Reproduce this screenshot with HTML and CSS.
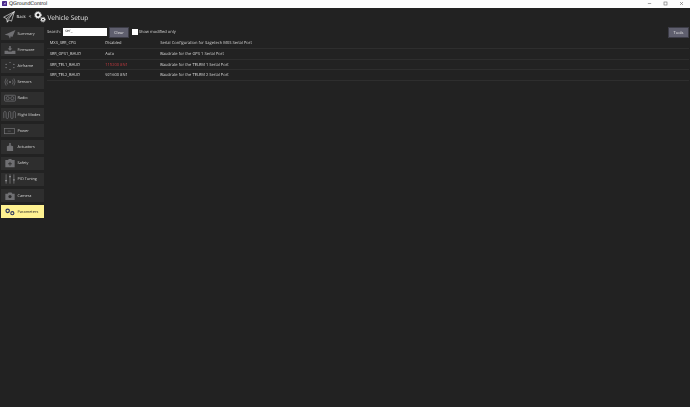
FILE: index.html
```html
<!DOCTYPE html>
<html lang="en">
<head>
<meta charset="utf-8">
<title>QGroundControl</title>
<link rel="stylesheet" href="styles.css">
</head>
<body>
<div class="titlebar">
  <svg class="app-icon" viewBox="0 0 8 8"><rect width="8" height="8" rx="1" fill="#4b2a8c"/><path d="M2 5.5 6 2 5 6 4 4.6z" fill="#e8e0f5"/></svg>
  <span class="app-name">QGroundControl</span>
  <div class="win-controls">
    <svg viewBox="0 0 6 6"><path d="M1 3h4" stroke="#666" stroke-width=".7"/></svg>
    <svg viewBox="0 0 6 6"><rect x="1.2" y="1.2" width="3.6" height="3.6" fill="none" stroke="#666" stroke-width=".7"/></svg>
    <svg viewBox="0 0 6 6"><path d="M1.2 1.2l3.6 3.6M4.8 1.2 1.2 4.8" stroke="#666" stroke-width=".7"/></svg>
  </div>
</div>
<div class="toolbar">
  <svg class="plane" viewBox="0 0 12 12"><path d="M11.4.6.6 6.2l3 1.4.7 3.6 2-2.2 2.2 1.2zM3.6 7.6 11.4.6 5.2 8.4l-.9 2.8" fill="none" stroke="#fff" stroke-width=".6" stroke-linejoin="round"/></svg>
  <span class="back">Back</span>
  <span class="chev">&lt;</span>
  <svg class="gears" viewBox="0 0 12 12"><g fill="none" stroke="#fff"><circle cx="4" cy="4" r="2.2" stroke-width="1.5"/><circle cx="4" cy="4" r="3.4" stroke-width=".8" stroke-dasharray="1 1"/><circle cx="9" cy="8.6" r="1.5" stroke-width="1.1"/><circle cx="9" cy="8.6" r="2.5" stroke-width=".7" stroke-dasharray=".8 .8"/></g></svg>
  <span class="page-title">Vehicle Setup</span>
</div>
<div class="main">
  <nav class="sidebar">
    <a class="nav-btn"><svg viewBox="0 0 18 12"><path d="M16 1 2 7l5 1 2 4 1-3 2 1z" fill="#6f6f72"/></svg><span>Summary</span></a>
    <a class="nav-btn"><svg viewBox="0 0 18 12"><path d="M8 1h2v3h2l-3 3-3-3h2zM2 7h4l1 1h4l1-1h4v4H2z" fill="#6f6f72"/></svg><span>Firmware</span></a>
    <a class="nav-btn"><svg viewBox="0 0 18 12"><g fill="#8a8a8d"><circle cx="9" cy="1.500" r=".8"/><circle cx="14" cy="4" r=".8"/><circle cx="14" cy="8" r=".8"/><circle cx="9" cy="10.500" r=".8"/><circle cx="4" cy="8" r=".8"/><circle cx="4" cy="4" r=".8"/></g></svg><span>Airframe</span></a>
    <a class="nav-btn"><svg viewBox="0 0 18 12"><g fill="none" stroke="#7c7c7f" stroke-width=".8"><path d="M6 3a5 5 0 0 0 0 6M12 3a5 5 0 0 1 0 6M4 1.500a8 8 0 0 0 0 9M14 1.500a8 8 0 0 1 0 9"/></g><circle cx="9" cy="6" r="1.200" fill="#7c7c7f"/></svg><span>Sensors</span></a>
    <a class="nav-btn"><svg viewBox="0 0 18 12"><rect x="2" y="2.500" width="14" height="7.500" rx="1" fill="none" stroke="#6f6f72"/><circle cx="6" cy="6.200" r="2" fill="none" stroke="#6f6f72"/><circle cx="12" cy="6.200" r="2" fill="none" stroke="#6f6f72"/></svg><span>Radio</span></a>
    <a class="nav-btn"><svg viewBox="0 0 18 12"><path d="M1 10V3c0-2 3-2 3 0v6c0 2 3 2 3 0V3c0-2 3-2 3 0v6c0 2 3 2 3 0V3c0-2 3-2 3 0v7" fill="none" stroke="#6f6f72"/></svg><span>Flight Modes</span></a>
    <a class="nav-btn"><svg viewBox="0 0 18 12"><rect x="2" y="3" width="13" height="6.500" fill="none" stroke="#7c7c7f" stroke-width=".8"/><path d="M6 6.200h4" stroke="#7c7c7f" stroke-width=".6"/></svg><span>Power</span></a>
    <a class="nav-btn"><svg viewBox="0 0 18 12"><path d="M8 1h2v3l3 1v6H5V5l3-1z" fill="#6f6f72"/></svg><span>Actuators</span></a>
    <a class="nav-btn"><svg viewBox="0 0 18 12"><path d="M7 2V1h4v1h4v9.500H3V2z" fill="#6f6f72"/><path d="M9 4.500v5M6.500 7h5" stroke="#2c2c2c" stroke-width="1.100"/></svg><span>Safety</span></a>
    <a class="nav-btn"><svg viewBox="0 0 18 12"><g stroke="#8a8a8d"><path d="M4 0v12M9 0v12M14 0v12" stroke-width=".8"/><path d="M2.800 8h2.400M7.800 3h2.400M12.800 7h2.400" stroke-width="1.600"/></g></svg><span>PID Tuning</span></a>
    <a class="nav-btn"><svg viewBox="0 0 18 12"><path d="M3 3h3l1-1.500h4L12 3h3v8H3z" fill="#6f6f72"/><circle cx="9" cy="6.800" r="2" fill="#2c2c2c"/></svg><span>Camera</span></a>
    <a class="nav-btn is-active"><svg viewBox="0 0 18 12"><g fill="none" stroke="#2b3560"><circle cx="6" cy="4.500" r="2.200" stroke-width="1.500"/><circle cx="12" cy="7.500" r="2" stroke-width="1.400"/></g></svg><span>Parameters</span></a>
  </nav>
  <section class="content">
    <div class="filter-row">
      <span class="search-label">Search:</span>
      <span class="search-input">ser_</span>
      <button class="btn btn-clear">Clear</button>
      <span class="check"></span>
      <span class="check-label">Show modified only</span>
      <button class="btn btn-tools">Tools</button>
    </div>
    <div class="param-row"><span class="p-name">MXS_SER_CFG</span><span class="p-value">Disabled</span><span class="p-desc">Serial Configuration for Sagetech MXS Serial Port</span></div>
    <div class="param-row"><span class="p-name">SER_GPS1_BAUD</span><span class="p-value">Auto</span><span class="p-desc">Baudrate for the GPS 1 Serial Port</span></div>
    <div class="param-row"><span class="p-name">SER_TEL1_BAUD</span><span class="p-value is-modified">115200 8N1</span><span class="p-desc">Baudrate for the TELEM 1 Serial Port</span></div>
    <div class="param-row"><span class="p-name">SER_TEL2_BAUD</span><span class="p-value">921600 8N1</span><span class="p-desc">Baudrate for the TELEM 2 Serial Port</span></div>
  </section>
</div>
</body>
</html>
```
FILE: styles.css
```css
* { box-sizing: border-box; }
html, body { margin: 0; height: 100%; }
body {
  width: 690px;
  height: 407px;
  overflow: hidden;
  background: #222222;
  color: #d4d4d4;
  font-family: "Open Sans", "Noto Sans", sans-serif;
  font-size: 4.050px;
  text-rendering: geometricPrecision;
  display: flex;
  flex-direction: column;
}
.titlebar {
  height: 7.500px;
  background: #fdfdfd;
  display: flex;
  align-items: center;
  padding: 0 0 0 2px;
  color: #222;
  flex: none;
}
.app-icon { width: 5px; height: 5px; margin-right: 2px; }
.app-name { font-size: 5.200px; font-family: "Liberation Sans", sans-serif; }
.win-controls { margin-left: auto; display: flex; gap: 11px; padding-right: 6px; }
.win-controls svg { width: 5px; height: 5px; display: block; }
.toolbar {
  height: 18.500px;
  flex: none;
  display: flex;
  align-items: center;
  padding: 0 0 0 3px;
  color: #e8e8e8;
  will-change: transform;
}
.plane { width: 12px; height: 12px; }
.back { margin-left: 1.500px; font-size: 4.100px; }
.chev { margin-left: 3px; font-size: 5px; }
.gears { width: 12px; height: 12px; margin-left: 2.500px; }
.page-title { margin-left: 1.500px; font-size: 6.500px; }
.main { flex: 1; display: flex; min-height: 0; will-change: transform; }
.sidebar {
  width: 46px;
  flex: none;
  padding: 1px 1px 0;
  display: flex;
  flex-direction: column;
  gap: 2.900px;
}
.nav-btn {
  height: 13.300px;
  width: 43px;
  background: #2e2e2e;
  display: flex;
  align-items: center;
  padding-left: 1.500px;
  color: #d0d0d0;
  font-size: 3.850px;
  white-space: nowrap;
}
.nav-btn span { padding-top: 1.200px; }
.nav-btn svg { width: 14px; height: 10px; flex: none; margin-right: 1px; }
.nav-btn.is-active { background: #fff291; color: #2b2b2b; }
.content { flex: 1; padding: 0 1px 0 1px; min-width: 0; }
.filter-row {
  height: 12.400px;
  display: flex;
  align-items: center;
}
.search-label { margin-right: 2px; padding-top: 1.200px; }
.search-input {
  width: 44px;
  height: 8.500px;
  background: #fff;
  color: #333;
  padding: 0.500px 0 0 2px;
  line-height: 8.500px;
}
.btn {
  border: 1px solid #3c3c46;
  background: #5f5f6e;
  color: #e4e4e4;
  font-family: inherit;
  font-size: 4.050px;
  padding: 0;
  height: 11px;
}
.btn-clear { width: 20.500px; margin-left: 1.800px; }
.check { width: 6.500px; height: 6.500px; background: #fff; margin-left: 2.500px; }
.check-label { margin-left: 0.500px; padding-top: 1.200px; }
.btn-tools { width: 21px; margin-left: auto; }
.param-row {
  height: 10.670px;
  display: flex;
  align-items: center;
  padding: 1.200px 0 0 2.700px;
  white-space: nowrap;
  border-bottom: 0.500px solid #2e2e2e;
}
.p-name { width: 55.500px; }
.p-value { width: 55px; }
.is-modified { color: #c0393f; }
```
